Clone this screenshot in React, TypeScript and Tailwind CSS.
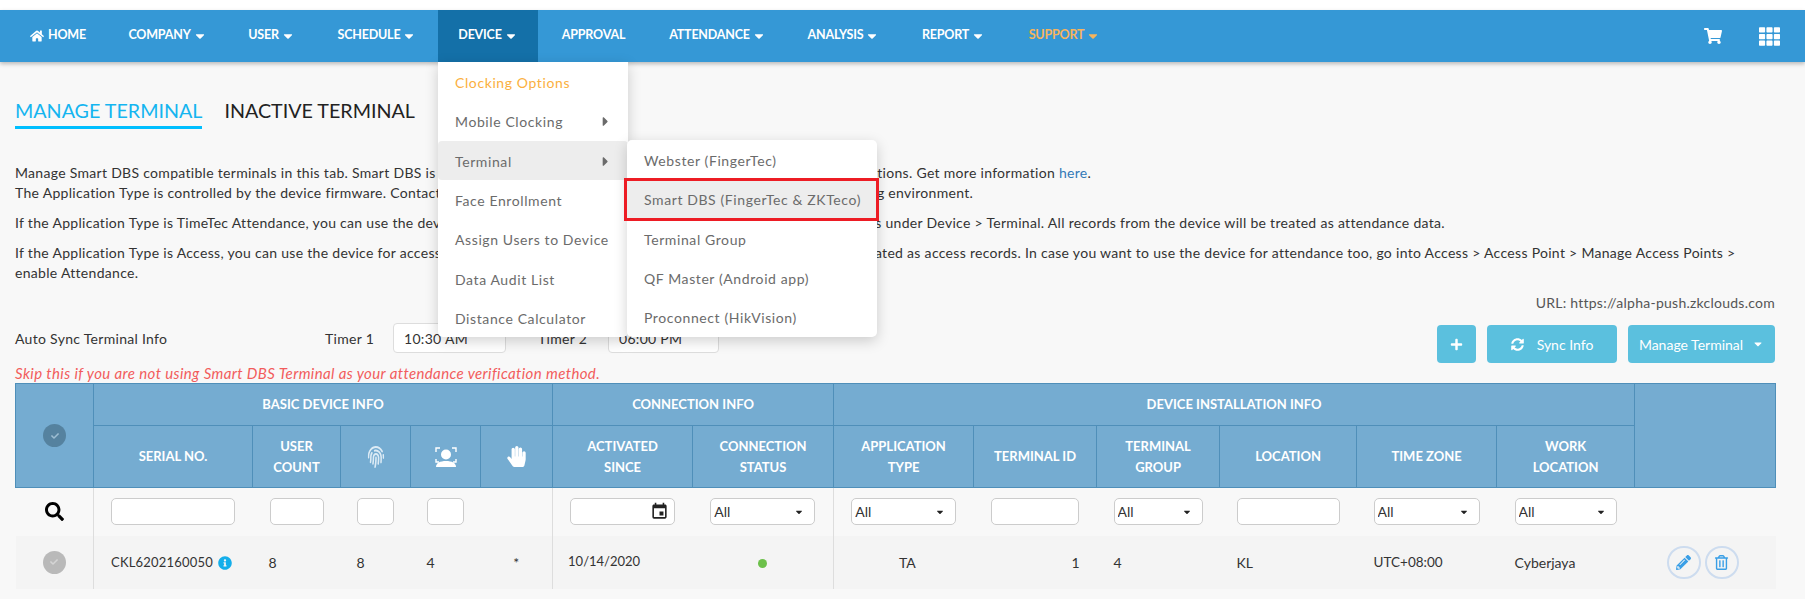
import React from "react";
import { FaHome, FaCaretDown, FaCaretRight, FaShoppingCart, FaTh, FaSearch, FaSyncAlt, FaPlus, FaPencilAlt, FaRegTrashAlt, FaInfoCircle, FaCheck, FaFingerprint, FaHandPaper } from "react-icons/fa";
import { MdEvent } from "react-icons/md";

const nav = [
  { t: "COMPANY", c: true, w: "w-[119px]" },
  { t: "USER", c: true, w: "w-[89px]" },
  { t: "SCHEDULE", c: true, w: "w-[122px]" },
  { t: "DEVICE", c: true, active: true, w: "w-[100px]" },
  { t: "APPROVAL", c: false, w: "w-[111px]" },
  { t: "ATTENDANCE", c: true, w: "w-[137px]" },
  { t: "ANALYSIS", c: true, w: "w-[115px]" },
  { t: "REPORT", c: true, w: "w-[105px]" },
  { t: "SUPPORT", c: true, support: true, w: "w-[117px]" },
];

function Face() {
  return (
    <svg width="22" height="22" viewBox="0 0 22 22" fill="none" className="mx-auto">
      <path d="M1 6V2h4M17 2h4v4M1 13v3h3M21 13v3h-3" stroke="white" strokeWidth="1.4" />
      <circle cx="11" cy="8.5" r="5" fill="white" />
      <path d="M1 21c0-4 4-6 10-6s10 2 10 6z" fill="white" />
    </svg>
  );
}

function Filter({ w }: { w: string }) {
  return <input className={`h-[27px] bg-white border border-[#ccc] rounded-[5px] block mx-auto ${w}`} />;
}

function Sel({ w }: { w: string }) {
  return (
    <div className={`relative mx-auto h-[27px] ${w}`}>
      <select className="appearance-none w-full h-full bg-white border border-[#ccc] rounded-[5px] pl-[3px] text-[14px] text-[#333]">
        <option>All</option>
      </select>
      <FaCaretDown className="absolute right-[11px] top-[9px] text-[#222] text-[10px]" />
    </div>
  );
}

function Th({ children, rowSpan, colSpan, cls = "" }: { children?: React.ReactNode; rowSpan?: number; colSpan?: number; cls?: string }) {
  return (
    <th rowSpan={rowSpan} colSpan={colSpan} className={`border border-[#4f8fb9] font-bold text-white text-[13px] leading-[21px] text-center align-middle ${cls}`}>
      {children}
    </th>
  );
}

const menu1 = ["Clocking Options", "Mobile Clocking", "Terminal", "Face Enrollment", "Assign Users to Device", "Data Audit List", "Distance Calculator"];
const menu2 = ["Webster (FingerTec)", "Smart DBS (FingerTec & ZKTeco)", "Terminal Group", "QF Master (Android app)", "Proconnect (HikVision)"];

export default function App() {
  return (
    <div className="relative w-[1805px] h-[599px] overflow-hidden bg-[#f8f8f8] font-['Lato','Noto_Sans',sans-serif] text-[14px] text-[#333]">
      <div className="h-[10px] bg-white" />
      <nav className="relative z-10 h-[52px] bg-[#3598d6] flex items-stretch text-white text-[12.5px] tracking-[-0.2px] font-bold shadow-[0_2px_4px_rgba(0,0,0,0.25)]">
        <div className="w-[108px] flex items-center justify-center gap-[4px] pb-[1px] pl-[8px]">
          <FaHome className="text-[14px]" />
          <span>HOME</span>
        </div>
        {nav.map((n) => (
          <div key={n.t} className={`flex items-center justify-center gap-[2px] pb-[1px] ${n.w} ${n.active ? "bg-[#1470a8]" : ""} ${n.support ? "text-[#f7b45c]" : ""}`}>
            <span>{n.t}</span>
            {n.c && <FaCaretDown className="text-[14px]" />}
          </div>
        ))}
        <div className="ml-auto flex items-center gap-[37px] pr-[25px]">
          <FaShoppingCart className="text-[18px]" />
          <FaTh className="text-[21px]" />
        </div>
      </nav>

      <div className="pl-[15px] pr-[30px]">
        <div className="flex gap-[22px] pt-[34px] text-[19.7px] leading-[30px]">
          <div className="text-[#14b5f0] border-b-[3px] border-[#00bfff] h-[33px]">MANAGE TERMINAL</div>
          <div className="text-[#222]">INACTIVE TERMINAL</div>
        </div>
        <div className="mt-[34px] leading-[20px] tracking-[0.3px]">
          <p>
            Manage Smart DBS compatible terminals in this tab. Smart DBS is compatible with FingerTec and ZKTeco terminals running TimeTec options. Get more information <span className="text-[#337ab7]">here</span>.
            <br />
            The Application Type is controlled by the device firmware. Contact your device resellers or support to change firmware for your working environment.
          </p>
          <p className="mt-[10px]">If the Application Type is TimeTec Attendance, you can use the device for attendance purposes only. Manage this device and its settings under Device &gt; Terminal. All records from the device will be treated as attendance data.</p>
          <p className="mt-[10px]">
            If the Application Type is Access, you can use the device for access control and door access only. All records from the device will be treated as access records. In case you want to use the device for attendance too, go into Access &gt; Access Point &gt; Manage Access Points &gt;
            <br />
            enable Attendance.
          </p>
        </div>
        <div className="mt-[10px] text-right text-[#555] leading-[20px] tracking-[0.25px]">URL: https://alpha-push.zkclouds.com</div>
        <div className="flex items-start mt-[10px] h-[40px]">
          <div className="flex items-center h-[30px] tracking-[0.3px]">
            <span className="w-[310px]">Auto Sync Terminal Info</span>
            <span className="w-[68px]">Timer 1</span>
            <input defaultValue="10:30 AM" className="w-[113px] h-[30px] bg-white border border-[#ddd] rounded-[4px] px-[10px]" />
            <span className="ml-[32px] w-[70px]">Timer 2</span>
            <input defaultValue="06:00 PM" className="w-[111px] h-[30px] bg-white border border-[#ddd] rounded-[4px] px-[10px]" />
          </div>
          <div className="ml-auto flex gap-[11px] text-white mt-[2px]">
            <button className="w-[39px] h-[38px] bg-[#5bc0de] rounded-[4px] flex items-center justify-center"><FaPlus className="text-[13px]" /></button>
            <button className="w-[130px] h-[38px] bg-[#5bc0de] rounded-[4px] flex items-center justify-center gap-[13px]"><FaSyncAlt className="text-[13px]" /><span>Sync Info</span></button>
            <button className="w-[147px] h-[38px] bg-[#5bc0de] rounded-[4px] flex items-center justify-center gap-[9px]"><span>Manage Terminal</span><FaCaretDown className="text-[12px]" /></button>
          </div>
        </div>
        <div className="italic text-[#f25c5c] text-[15px] tracking-[0.38px] leading-[20px]">Skip this if you are not using Smart DBS Terminal as your attendance verification method.</div>

        <table className="table-fixed w-[1760px] border-collapse">
          <colgroup>
            <col className="w-[78px]" />
            <col className="w-[159px]" />
            <col className="w-[88px]" />
            <col className="w-[70px]" />
            <col className="w-[70px]" />
            <col className="w-[72px]" />
            <col className="w-[140px]" />
            <col className="w-[141px]" />
            <col className="w-[140px]" />
            <col className="w-[123px]" />
            <col className="w-[123px]" />
            <col className="w-[137px]" />
            <col className="w-[140px]" />
            <col className="w-[138px]" />
            <col className="w-[141px]" />
          </colgroup>
          <thead className="bg-[#75acd1]">
            <tr className="h-[42px]">
              <Th rowSpan={2}>
                <span className="mx-auto flex w-[23px] h-[23px] rounded-full bg-[#55829f] items-center justify-center"><FaCheck className="text-[8px] text-[#9dbdd2]" /></span>
              </Th>
              <Th colSpan={5}>BASIC DEVICE INFO</Th>
              <Th colSpan={2}>CONNECTION INFO</Th>
              <Th colSpan={6}>DEVICE INSTALLATION INFO</Th>
              <Th rowSpan={2} />
            </tr>
            <tr className="h-[62px]">
              <Th>SERIAL NO.</Th>
              <Th>USER<br />COUNT</Th>
              <Th><FaFingerprint className="mx-auto text-[22px] text-[#dcebf5] scale-x-75" /></Th>
              <Th><Face /></Th>
              <Th><FaHandPaper className="mx-auto text-[21px]" /></Th>
              <Th>ACTIVATED<br />SINCE</Th>
              <Th>CONNECTION<br />STATUS</Th>
              <Th>APPLICATION<br />TYPE</Th>
              <Th>TERMINAL ID</Th>
              <Th>TERMINAL<br />GROUP</Th>
              <Th>LOCATION</Th>
              <Th>TIME ZONE</Th>
              <Th>WORK<br />LOCATION</Th>
            </tr>
          </thead>
          <tbody>
            <tr className="h-[48px]">
              <td className="border-r border-[#ddd] text-center"><FaSearch className="mx-auto text-[19px] text-black" /></td>
              <td><Filter w="w-[124px]" /></td>
              <td><Filter w="w-[54px]" /></td>
              <td><Filter w="w-[37px]" /></td>
              <td><Filter w="w-[37px]" /></td>
              <td className="border-r border-[#ddd]" />
              <td>
                <div className="relative mx-auto w-[105px] h-[27px]">
                  <input className="w-full h-full bg-white border border-[#ccc] rounded-[5px]" />
                  <MdEvent className="absolute right-[6px] top-[4px] text-[19px] text-[#222]" />
                </div>
              </td>
              <td className="border-r border-[#ddd]"><Sel w="w-[105px]" /></td>
              <td><Sel w="w-[105px]" /></td>
              <td><Filter w="w-[88px]" /></td>
              <td><Sel w="w-[89px]" /></td>
              <td><Filter w="w-[103px]" /></td>
              <td><Sel w="w-[106px]" /></td>
              <td><Sel w="w-[102px]" /></td>
              <td />
            </tr>
            <tr className="h-[53px] bg-[#f4f4f4]">
              <td className="border-r border-[#ddd]">
                <span className="mx-auto flex w-[23px] h-[23px] rounded-full bg-[#b9b9b9] items-center justify-center"><FaCheck className="text-[8px] text-[#d5d5d5]" /></span>
              </td>
              <td className="pl-[17px]">
                <span className="inline-flex items-center gap-[5px] text-[13px] tracking-[0.2px]">CKL6202160050 <FaInfoCircle className="text-[#14aeea] text-[14px]" /></span>
              </td>
              <td className="pl-[16px]">8</td>
              <td className="pl-[16px]">8</td>
              <td className="pl-[16px]">4</td>
              <td className="text-center">*</td>
              <td className="border-l border-[#ddd] pl-[15px] text-[13px]">10/14/2020</td>
              <td className="border-r border-[#ddd] text-center"><span className="inline-block w-[9px] h-[9px] rounded-full bg-[#6cc04a] mt-[6px]" /></td>
              <td className="pl-[65px]">TA</td>
              <td className="text-right pr-[17px]">1</td>
              <td className="pl-[17px]">4</td>
              <td className="pl-[17px]">KL</td>
              <td className="pl-[17px] text-[13.5px]">UTC+08:00</td>
              <td className="pl-[18px]">Cyberjaya</td>
              <td className="pl-[32px]">
                <div className="flex gap-[4px]">
                  <span className="flex w-[34px] h-[33px] rounded-full border-2 border-[#cddcef] items-center justify-center text-[#3a9fe6]"><FaPencilAlt className="text-[15px]" /></span>
                  <span className="flex w-[34px] h-[33px] rounded-full border-2 border-[#cddcef] items-center justify-center text-[#3a9fe6]"><FaRegTrashAlt className="text-[15px]" /></span>
                </div>
              </td>
            </tr>
          </tbody>
        </table>
      </div>

      <div className="absolute z-20 left-[438px] top-[62px] w-[190px] h-[275px] bg-white rounded-b-[5px] shadow-[0_4px_14px_rgba(0,0,0,0.18)] tracking-[0.6px] text-[#6b6b6b]">
        {menu1.map((m, i) => (
          <div key={m} className={`flex items-center justify-between h-[39.3px] pt-[2px] pl-[17px] pr-[15px] ${i === 0 ? "text-[#fbb040]" : ""} ${i === 2 ? "bg-[#ededed] rounded-[4px]" : ""}`}>
            <span>{m}</span>
            {(i === 1 || i === 2) && <FaCaretRight className="text-[15px]" />}
          </div>
        ))}
      </div>
      <div className="absolute z-20 left-[627px] top-[140px] w-[250px] h-[197px] bg-white rounded-[5px] shadow-[0_4px_14px_rgba(0,0,0,0.18)] tracking-[0.6px] text-[#6b6b6b]">
        {menu2.map((m, i) => (
          <div key={m} className={`flex items-center h-[39.3px] pt-[2px] pl-[17px] ${i === 1 ? "bg-[#ededed]" : ""}`}>{m}</div>
        ))}
      </div>
      <div className="absolute z-30 left-[624px] top-[178px] w-[255px] h-[43px] border-[3px] border-[#ed1c24]" />
    </div>
  );
}
